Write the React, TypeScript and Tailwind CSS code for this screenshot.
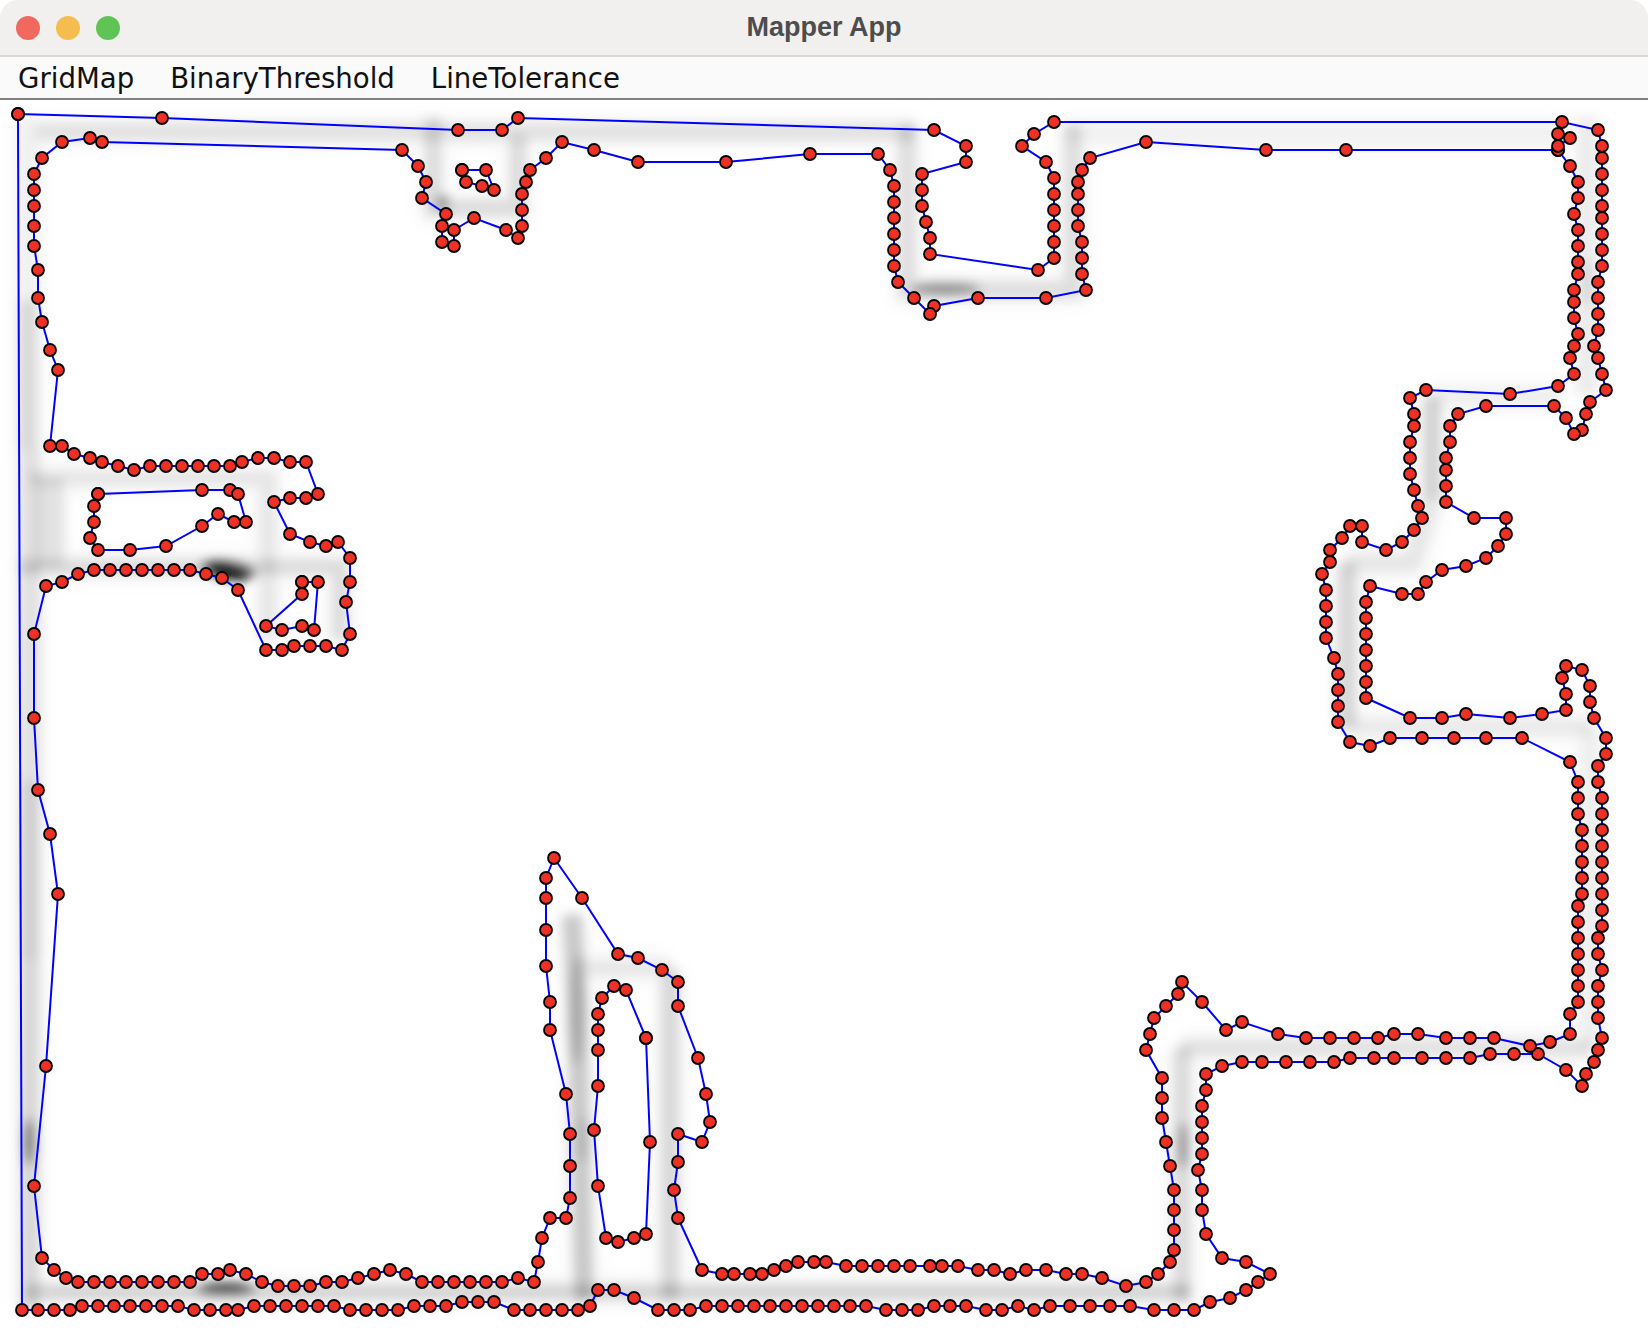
const outer = `18,114 162,118 458,130 502,130 518,118 934,130 966,146 966,162 922,174 922,190 922,206 926,222 930,238 930,254 1038,270 1054,258 1054,242 1054,226 1054,210 1054,194 1054,178 1046,162 1022,146 1034,134 1054,122 1562,122 1598,130 1602,146 1602,158 1602,174 1602,190 1602,206 1602,218 1602,234 1602,250 1602,266 1598,282 1598,298 1598,314 1598,330 1594,346 1598,358 1602,374 1606,390 1590,402 1586,414 1582,430 1574,434 1566,418 1554,406 1486,406 1458,414 1450,426 1450,442 1446,458 1446,470 1446,486 1446,502 1474,518 1506,518 1506,534 1498,546 1486,558 1466,566 1442,570 1426,582 1418,594 1402,594 1370,586 1366,602 1366,618 1366,634 1366,650 1366,666 1366,682 1366,698 1410,718 1442,718 1466,714 1510,718 1542,714 1566,710 1566,694 1562,678 1566,666 1582,670 1590,686 1590,702 1594,718 1606,738 1606,754 1598,766 1598,782 1602,798 1602,814 1602,830 1602,846 1602,862 1602,878 1602,894 1602,910 1602,926 1598,938 1598,954 1602,970 1598,986 1598,1002 1598,1018 1602,1038 1598,1050 1594,1062 1586,1074 1582,1086 1566,1070 1538,1054 1514,1054 1490,1054 1470,1058 1446,1058 1422,1058 1394,1058 1374,1058 1350,1058 1334,1062 1310,1062 1286,1062 1262,1062 1242,1062 1222,1066 1206,1074 1206,1090 1202,1106 1202,1122 1202,1138 1202,1154 1198,1170 1202,1190 1202,1210 1206,1234 1222,1258 1246,1262 1270,1274 1258,1282 1246,1290 1230,1298 1210,1302 1194,1310 1174,1310 1154,1310 1130,1306 1110,1306 1090,1306 1070,1306 1050,1306 1034,1310 1018,1306 1002,1310 986,1310 966,1306 950,1306 934,1306 918,1310 902,1310 886,1310 866,1306 850,1306 834,1306 818,1306 802,1306 786,1306 770,1306 754,1306 738,1306 722,1306 706,1306 690,1310 674,1310 658,1310 634,1298 614,1290 598,1290 590,1306 578,1310 562,1310 546,1310 530,1310 514,1310 494,1302 478,1302 462,1302 446,1306 430,1306 414,1306 398,1310 382,1310 366,1310 350,1310 334,1306 318,1306 302,1306 286,1306 270,1306 254,1306 238,1310 226,1310 210,1310 194,1310 178,1306 162,1306 146,1306 130,1306 114,1306 98,1306 82,1306 70,1310 54,1310 38,1310 22,1310 18,114`;

const inner = `1558,150 1346,150 1266,150 1146,142 1090,158 1082,170 1078,182 1078,194 1078,210 1078,226 1082,242 1082,258 1082,274 1086,290 1046,298 978,298 934,306 930,314 914,298 898,282 894,266 894,250 894,234 894,218 894,202 894,186 890,170 878,154 810,154 726,162 638,162 594,150 562,142 546,158 530,170 526,182 522,194 522,210 522,226 518,238 506,230 474,218 454,230 454,246 442,242 442,226 446,214 422,198 426,182 418,166 402,150 102,142 90,138 62,142 42,158 34,174 34,190 34,206 34,226 34,246 38,270 38,298 42,322 50,350 58,370 50,446 62,446 74,454 90,458 102,462 118,466 134,470 150,466 166,466 182,466 198,466 214,466 230,466 242,462 258,458 274,458 290,462 306,462 318,494 306,498 290,498 274,502 290,534 310,542 326,546 338,542 350,558 350,582 346,602 350,634 342,650 326,646 310,646 294,646 282,650 266,650 238,590 222,578 206,574 190,570 174,570 158,570 142,570 126,570 110,570 94,570 78,574 62,582 46,586 34,634 34,718 38,790 50,834 58,894 46,1066 34,1186 42,1258 54,1270 66,1278 78,1282 94,1282 110,1282 126,1282 142,1282 158,1282 174,1282 190,1282 202,1274 218,1274 230,1270 246,1274 262,1282 278,1286 294,1286 310,1286 326,1282 342,1282 358,1278 374,1274 390,1270 406,1274 422,1282 438,1282 454,1282 470,1282 486,1282 502,1282 518,1278 534,1282 538,1262 542,1238 550,1218 566,1218 570,1198 570,1166 570,1134 566,1094 550,1030 550,1002 546,966 546,930 546,898 546,878 554,858 582,898 618,954 638,958 662,970 678,982 678,1006 698,1058 706,1094 710,1122 702,1142 678,1134 678,1162 674,1190 678,1218 702,1270 722,1274 734,1274 750,1274 762,1274 774,1270 786,1266 798,1262 814,1262 826,1262 846,1266 862,1266 878,1266 894,1266 910,1266 930,1266 942,1266 958,1266 978,1270 994,1270 1010,1274 1026,1270 1046,1270 1066,1274 1082,1274 1102,1278 1126,1286 1146,1282 1158,1274 1170,1262 1174,1250 1174,1230 1174,1210 1174,1190 1170,1166 1166,1142 1162,1118 1162,1098 1162,1078 1146,1050 1150,1034 1154,1018 1166,1006 1178,994 1182,982 1202,1002 1226,1030 1242,1022 1278,1034 1306,1038 1330,1038 1354,1038 1378,1038 1394,1034 1418,1034 1446,1038 1470,1038 1494,1038 1530,1046 1550,1042 1570,1034 1570,1014 1578,1002 1578,986 1578,970 1578,954 1578,938 1578,922 1578,906 1582,894 1582,878 1582,862 1582,846 1582,830 1578,814 1578,798 1578,782 1570,762 1522,738 1486,738 1454,738 1422,738 1390,738 1370,746 1350,742 1338,722 1338,706 1338,690 1338,674 1334,658 1326,638 1326,622 1326,606 1326,590 1322,574 1330,562 1330,550 1342,538 1350,526 1362,526 1362,542 1386,550 1402,542 1414,530 1422,518 1418,506 1414,490 1410,474 1410,458 1410,442 1414,426 1414,414 1410,398 1426,390 1510,394 1558,386 1574,374 1570,358 1574,346 1578,334 1574,318 1574,302 1574,290 1578,274 1578,262 1578,246 1578,230 1574,214 1578,198 1578,182 1570,166 1558,150`;

// smaller closed rings inside the walls
const rings = [
  `462,170 486,170 494,190 482,186 466,182 462,170`,
  `98,494 202,490 230,490 238,494 246,522 234,522 218,514 202,526 166,546 130,550 98,550 90,538 94,522 94,506 98,494`,
  `302,582 318,582 314,630 302,626 282,630 266,626 302,594 302,582`,
  `646,1038 626,990 614,986 602,998 598,1014 598,1030 598,1050 598,1086 594,1130 598,1186 606,1238 618,1242 634,1238 646,1234 650,1142 646,1038`,
  `1558,146 1570,138 1558,134`,
];

// grey occupancy ridges, drawn blurred under the contours
const ridges: { d: string; c: string; w: number }[] = [
  { d: 'M28 118V300', c: '#f0f0f0', w: 18 },
  { d: 'M28 300V450', c: '#d8d8d8', w: 18 },
  { d: 'M30 450V780', c: '#e0e0e0', w: 20 },
  { d: 'M30 780V960', c: '#cecece', w: 18 },
  { d: 'M30 960V1310', c: '#d6d6d6', w: 18 },
  { d: 'M36 132H915', c: '#e2e2e2', w: 18 },
  { d: 'M1066 133H1570', c: '#f0f0f0', w: 18 },
  { d: 'M1587 118V395', c: '#ebebeb', w: 18 },
  { d: 'M1432 397H1560', c: '#eeeeee', w: 16 },
  { d: 'M1432 397V500', c: '#d2d2d2', w: 17 },
  { d: 'M1432 500L1412 563H1347', c: '#e6e6e6', w: 18 },
  { d: 'M1347 563V727', c: '#d6d6d6', w: 18 },
  { d: 'M1347 727H1590', c: '#eaeaea', w: 18 },
  { d: 'M1590 727V1050', c: '#eeeeee', w: 18 },
  { d: 'M1182 1048H1590', c: '#e2e2e2', w: 17 },
  { d: 'M1182 1048V1300', c: '#dadada', w: 17 },
  { d: 'M26 1292H1190', c: '#d4d4d4', w: 16 },
  { d: 'M433 118V208H518V135', c: '#dcdcdc', w: 17 },
  { d: 'M907 125V290H1073V125', c: '#dedede', w: 18 },
  { d: 'M30 478H268V640', c: '#e6e6e6', w: 16 },
  { d: 'M20 567H340V640', c: '#dcdcdc', w: 16 },
  { d: 'M50 478V567', c: '#e2e2e2', w: 28 },
  { d: 'M572 915L577 1000L584 1300', c: '#c8c8c8', w: 19 },
  { d: 'M670 970V1300', c: '#d8d8d8', w: 18 },
  { d: 'M577 968H670', c: '#e6e6e6', w: 16 },
];

const hotspots: { cx: number; cy: number; rx: number; ry: number; c: string; rot?: number }[] = [
  { cx: 228, cy: 570, rx: 28, ry: 9, c: '#000000', rot: 8 },
  { cx: 226, cy: 1289, rx: 30, ry: 6, c: '#333333' },
  { cx: 29, cy: 1142, rx: 5, ry: 24, c: '#666666' },
  { cx: 1183, cy: 1146, rx: 5, ry: 24, c: '#909090' },
  { cx: 945, cy: 289, rx: 36, ry: 6, c: '#888888' },
  { cx: 442, cy: 203, rx: 8, ry: 8, c: '#999999' },
  { cx: 577, cy: 1010, rx: 8, ry: 55, c: '#a8a8a8' },
  { cx: 583, cy: 1140, rx: 6, ry: 24, c: '#b0b0b0' },
  { cx: 1587, cy: 283, rx: 4, ry: 26, c: '#cccccc' },
];

const parse = (s: string) => s.split(' ').map((p) => p.split(',').map(Number));

function Contour({ points }: { points: string }) {
  return <polyline points={points} fill="none" stroke="#0000ff" strokeWidth={2} />;
}

function Dots({ points }: { points: string }) {
  return (
    <>
      {parse(points).map(([x, y], i) => (
        <circle key={i} cx={x} cy={y} r={6} fill="#ee3124" stroke="#000000" strokeWidth={1.8} />
      ))}
    </>
  );
}

function MapCanvas() {
  return (
    <svg width="1648" height="1240" viewBox="0 100 1648 1240" className="block bg-white">
      <defs>
        <filter id="halo" x="-5%" y="-5%" width="110%" height="110%">
          <feGaussianBlur stdDeviation="9" />
        </filter>
        <filter id="ridge" x="-5%" y="-5%" width="110%" height="110%">
          <feGaussianBlur stdDeviation="5.5" />
        </filter>
      </defs>
      <g filter="url(#halo)" fill="none">
        {ridges.map((r, i) => (
          <path key={i} d={r.d} stroke="#f9f9f9" strokeWidth={34} />
        ))}
      </g>
      <g filter="url(#ridge)" fill="none">
        {ridges.map((r, i) => (
          <path key={i} d={r.d} stroke={r.c} strokeWidth={r.w} style={{ mixBlendMode: 'multiply' }} />
        ))}
        {hotspots.map((h, i) => (
          <ellipse
            key={i}
            cx={h.cx}
            cy={h.cy}
            rx={h.rx}
            ry={h.ry}
            fill={h.c}
            transform={h.rot ? `rotate(${h.rot} ${h.cx} ${h.cy})` : undefined}
          />
        ))}
      </g>
      <Contour points={outer} />
      <Contour points={inner} />
      {rings.map((r, i) => (
        <Contour key={i} points={r} />
      ))}
      <Dots points={outer} />
      <Dots points={inner} />
      {rings.map((r, i) => (
        <Dots key={i} points={r} />
      ))}
    </svg>
  );
}

export default function App() {
  return (
    <div className="relative w-[1648px] h-[1340px] overflow-hidden bg-white font-['DejaVu_Sans',sans-serif]">
      <div className="flex h-[57px] items-center justify-center relative bg-[#f1f0ee] border-b-2 border-[#d8d8d8] rounded-t-[18px]">
        <div className="absolute left-4 flex gap-4">
          <span className="w-6 h-6 rounded-full bg-[#f0685e]" />
          <span className="w-6 h-6 rounded-full bg-[#f5bd4f]" />
          <span className="w-6 h-6 rounded-full bg-[#60c455]" />
        </div>
        <span className="font-['Liberation_Sans',sans-serif] font-bold text-[27px] text-[#4d4d4d]">Mapper App</span>
      </div>
      <div className="flex items-center h-[43px] pl-[18px] pt-[2px] gap-[36px] bg-[#fafafa] border-b-2 border-[#808080] text-[27.6px] text-[#111111]">
        <span>GridMap</span>
        <span>BinaryThreshold</span>
        <span>LineTolerance</span>
      </div>
      <MapCanvas />
    </div>
  );
}
